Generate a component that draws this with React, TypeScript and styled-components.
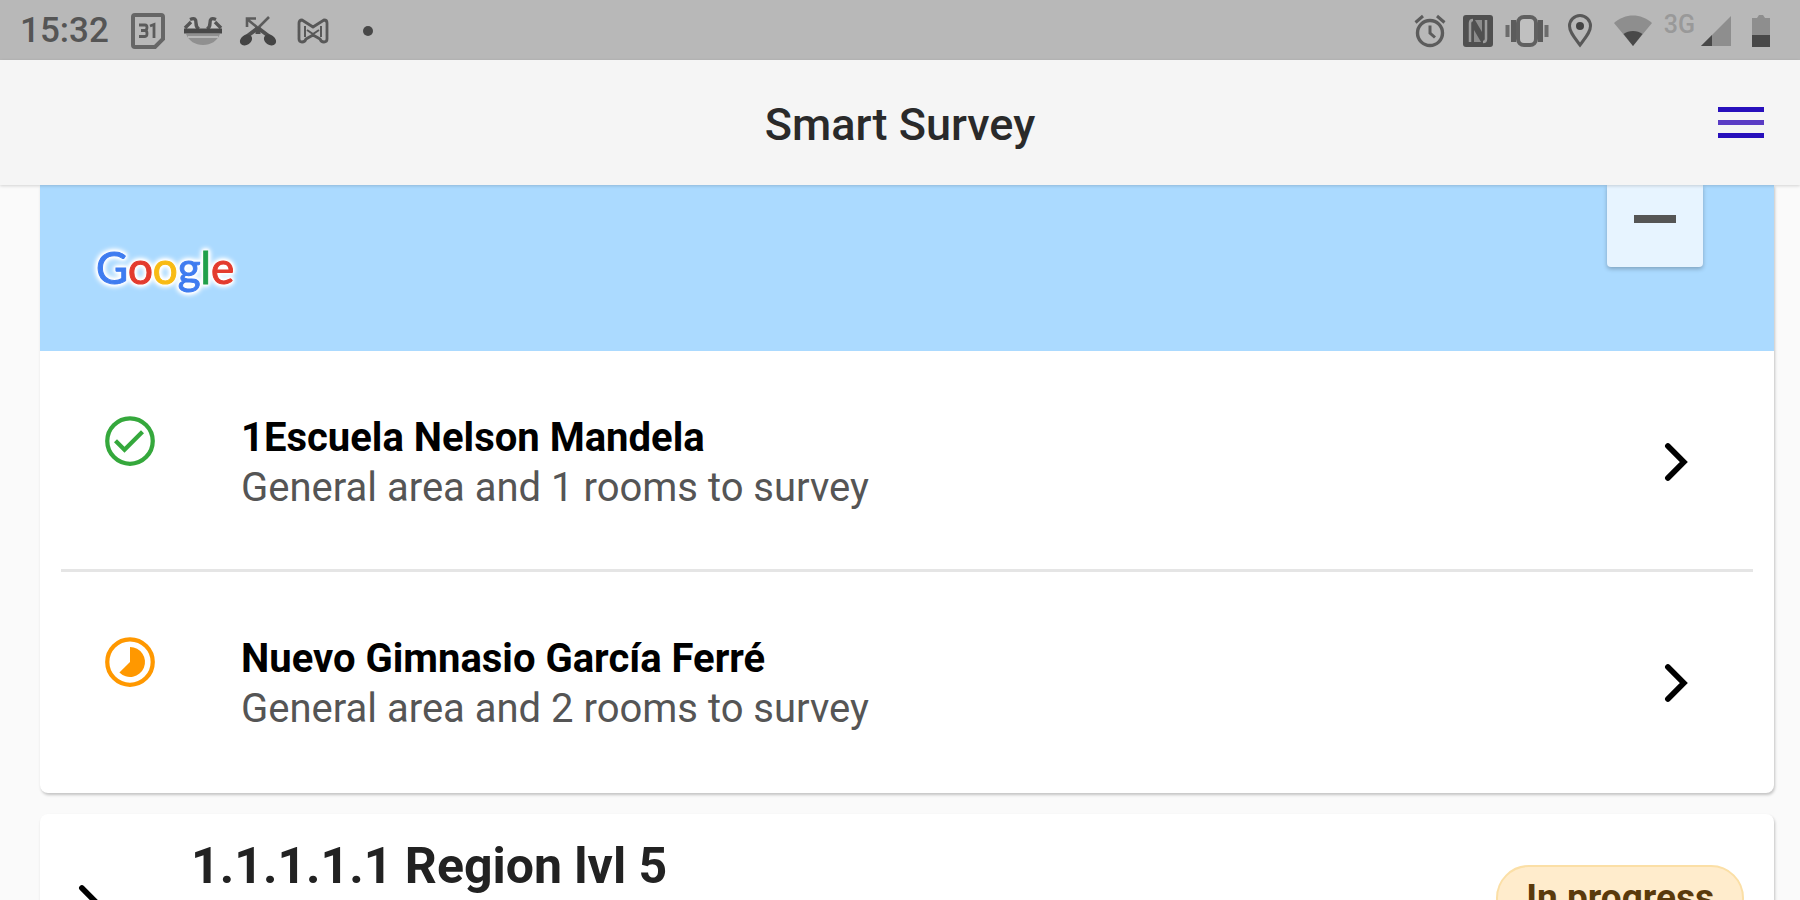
import React from "react";
import styled, { createGlobalStyle } from "styled-components";

const GlobalStyle = createGlobalStyle`
  *, *::before, *::after { box-sizing: border-box; }
  body {
    margin: 0;
    background: #fafafa;
    font-family: Roboto, "Liberation Sans", sans-serif;
    color: #000;
  }
  button { font: inherit; border: 0; padding: 0; margin: 0; color: inherit; cursor: pointer; }
`;

const Screen = styled.div`
  display: flex;
  flex-direction: column;
  height: 100vh;
  overflow: hidden;
`;

const StatusBar = styled.div`
  flex: none;
  display: flex;
  align-items: center;
  justify-content: space-between;
  height: 60px;
  padding: 2px 29px 0 20px;
  background: #b8b8b8;
  color: #555;
`;

const StatusGroup = styled.div`
  display: flex;
  align-items: center;
`;

const Clock = styled.time`
  font-size: 35px;
  font-weight: 500;
  line-height: 40px;
  margin-right: 12px;
`;

const Slot = styled.span<{ $width: number }>`
  display: flex;
  justify-content: center;
  width: ${(p) => p.$width}px;
`;

const Network = styled.span`
  display: flex;
  align-items: center;
  gap: 6px;
  padding: 0 20px 0 6px;
`;

const NetworkLabel = styled.span`
  font-size: 25px;
  font-weight: 500;
  line-height: 24px;
  padding-bottom: 12px;
  color: #999;
`;

const Header = styled.header`
  flex: none;
  position: relative;
  z-index: 1;
  display: grid;
  grid-template-columns: 1fr auto 1fr;
  align-items: center;
  height: 125px;
  padding: 0 36px;
  background: #f5f5f5;
  box-shadow: 0 1px 3px rgba(0, 0, 0, 0.16);
`;

const AppTitle = styled.h1`
  grid-column: 2;
  margin: 0;
  padding-top: 4px;
  font-size: 45px;
  font-weight: 500;
  line-height: 52px;
  color: #2a2a2a;
`;

const MenuButton = styled.button`
  justify-self: end;
  display: flex;
  flex-direction: column;
  gap: 8px;
  background: none;
`;

const MenuLine = styled.span`
  width: 46px;
  height: 5px;
  background: #2810bc;
  &:nth-child(2) {
    background: #5a3cc4;
  }
`;

const Content = styled.main`
  flex: 1;
  min-height: 0;
  overflow: hidden;
  display: flex;
  flex-direction: column;
  gap: 21px;
  padding: 0 26px 0 40px;
`;

const Card = styled.section<{ $continued?: boolean }>`
  flex: none;
  background: #fff;
  border-radius: ${(p) => (p.$continued ? "0 0 8px 8px" : "8px")};
  box-shadow: 1px 2px 3px rgba(0, 0, 0, 0.22);
`;

const MapStrip = styled.div`
  display: flex;
  justify-content: space-between;
  align-items: flex-start;
  height: 166px;
  padding: 0 71px 0 56px;
  background: #abdaff;
`;

const MapLogo = styled.span`
  padding-top: 56px;
  font-family: Lato, sans-serif;
  font-size: 44px;
  line-height: 52px;
  filter: drop-shadow(0 0 1px #fff) drop-shadow(0 0 1px #fff) drop-shadow(0 0 2px #fff) drop-shadow(0 0 2px #fff);
`;

const Letter = styled.span<{ $color: string }>`
  color: ${(p) => p.$color};
  -webkit-text-stroke: 1px ${(p) => p.$color};
`;

const ZoomOut = styled.button`
  display: flex;
  justify-content: center;
  width: 96px;
  height: 82px;
  padding-top: 30px;
  border-radius: 0 0 4px 4px;
  background: #e7f4ff;
  box-shadow: 0 2px 4px rgba(0, 0, 0, 0.25);
  &::before {
    content: "";
    width: 42px;
    height: 8px;
    background: #555;
  }
`;

const SiteList = styled.ul`
  margin: 0;
  padding: 0 0 3px;
  list-style: none;
`;

const Site = styled.li`
  & + &::before {
    content: "";
    display: block;
    height: 3px;
    margin: 0 21px;
    background: #e5e5e5;
  }
`;

const SiteRow = styled.button`
  display: flex;
  align-items: center;
  width: 100%;
  padding: 60px 62px 56px 60px;
  background: none;
  text-align: left;
`;

const StateIcon = styled.svg`
  flex: none;
  align-self: flex-start;
  width: 60px;
  height: 60px;
`;

const SiteText = styled.span`
  flex: 1;
  display: flex;
  flex-direction: column;
  padding: 2px 0 0 81px;
`;

const SiteName = styled.span`
  font-size: 40px;
  font-weight: 700;
  line-height: 50px;
`;

const SiteDetail = styled.span`
  font-size: 40px;
  line-height: 50px;
  color: #555;
`;

const ChevronIcon = styled.svg`
  flex: none;
  width: 72px;
  height: 72px;
`;

const RegionHeader = styled.button`
  display: flex;
  align-items: center;
  width: 100%;
  height: 180px;
  padding: 0 30px 0 14px;
  background: none;
  text-align: left;
`;

const RegionName = styled.span`
  flex: 1;
  align-self: flex-start;
  padding: 24px 0 0 65px;
  font-size: 50px;
  font-weight: 700;
  line-height: 56px;
  color: #222;
`;

const Badge = styled.span`
  align-self: flex-start;
  margin-top: 51px;
  padding: 6px 28px;
  border: 2px solid #fbdfa6;
  border-radius: 40px;
  background: #ffeccc;
  color: #5a3a0c;
  font-size: 37px;
  font-weight: 700;
  line-height: 50px;
`;

const Chevron = () => (
  <ChevronIcon viewBox="0 0 24 24" aria-hidden="true">
    <path d="M9.3 6.7 14.6 12l-5.3 5.3" fill="none" stroke="#000" strokeWidth="1.9" strokeLinecap="round" />
  </ChevronIcon>
);

const DoneIcon = () => (
  <StateIcon viewBox="0 0 24 24" role="img" aria-label="Completed">
    <circle cx="12" cy="12" r="9.1" fill="none" stroke="#35a83c" strokeWidth="1.7" />
    <path d="m6.2 11.9 3.6 3.6 7.2-7.2" fill="none" stroke="#35a83c" strokeWidth="1.7" />
  </StateIcon>
);

const PartialIcon = () => (
  <StateIcon viewBox="0 0 24 24" role="img" aria-label="Partly completed">
    <circle cx="12" cy="12" r="9.1" fill="none" stroke="#ff9800" strokeWidth="1.7" />
    <path d="M12 6a6 6 0 1 1-4.24 10.24L12 12z" fill="#ff9800" />
  </StateIcon>
);

const CalendarIcon = () => (
  <svg width="36" height="38" viewBox="0 0 36 38" aria-hidden="true">
    <path d="M5 3h26a2 2 0 0 1 2 2v22l-8 8H5a2 2 0 0 1-2-2V5a2 2 0 0 1 2-2z" fill="none" stroke="#666" strokeWidth="4" />
    <path d="M9 13h6q2 0 2 2.500t-2 3h-4 4q2 0 2 3t-2 3H9M20 14l4-1.500V26" fill="none" stroke="#5c5c5c" strokeWidth="2.800" />
  </svg>
);

const FaceIcon = () => (
  <svg width="40" height="30" viewBox="0 0 40 30" aria-hidden="true">
    <path d="M2 13C3 8 5 5 8 5c5-1 6 3 7 8M38 13C37 8 35 5 32 5c-5-1-6 3-7 8" fill="#c4c4c4" stroke="none" />
    <path d="M2 12 8 6M7 3.500c5-2 6 0 6 3.500 0 3 1 5 3 6M38 12 32 6M33 3.500c-5-2-6 0-6 3.500 0 3-1 5-3 6" fill="none" stroke="#555" strokeWidth="3.400" />
    <path d="M1 12.500h38v5H1z" fill="#484848" />
    <path d="M3 18c3 7 9 11 17 11s14-4 17-11z" fill="#909090" />
    <path d="M5 21h30" fill="none" stroke="#b8b8b8" strokeWidth="2" />
  </svg>
);

const MissedCallIcon = () => (
  <svg width="38" height="32" viewBox="0 0 38 32" aria-hidden="true">
    <path d="M30 2 19 13 8 4M8 12V3.500h9" fill="none" stroke="#5c5c5c" strokeWidth="2.600" />
    <path d="M19 12v7" stroke="#505050" strokeWidth="5" />
    <path d="M19 13 7 22M19 13l12 9" stroke="#505050" strokeWidth="4" />
    <ellipse cx="7" cy="25" rx="6.500" ry="5" transform="rotate(-35 7 25)" fill="#444" />
    <ellipse cx="31" cy="25" rx="6.500" ry="5" transform="rotate(35 31 25)" fill="#444" />
  </svg>
);

const MailIcon = () => (
  <svg width="32" height="26" viewBox="0 0 32 26" aria-hidden="true">
    <path d="M2 5q0-3 3-3l11 7 11-7q3 0 3 3v16q0 3-3 3-3 0-4-3l-7-4-7 4q-1 3-4 3-3 0-3-3z" fill="none" stroke="#585858" strokeWidth="2.800" strokeLinejoin="round" />
    <path d="M8 8v11M24 8v11M10 12l6 4 6-4" fill="none" stroke="#585858" strokeWidth="2" />
  </svg>
);

const DotIcon = () => (
  <svg width="12" height="12" viewBox="0 0 12 12" aria-hidden="true">
    <circle cx="6" cy="6" r="5" fill="#484848" />
  </svg>
);

const AlarmIcon = () => (
  <svg width="32" height="34" viewBox="0 0 32 34" aria-hidden="true">
    <circle cx="16" cy="19" r="12.500" fill="none" stroke="#5c5c5c" strokeWidth="3.400" />
    <path d="M1.500 8.500 9 2M30.500 8.500 23 2M16 11.500V19l5 4.500" fill="none" stroke="#5c5c5c" strokeWidth="3" />
  </svg>
);

const NfcIcon = () => (
  <svg width="32" height="32" viewBox="0 0 32 32" aria-hidden="true">
    <rect x="1" y="0" width="30" height="32" rx="3" fill="#505050" />
    <path d="M8 27V8q0-3 3-3M24 5v19q0 3-3 3" fill="none" stroke="#9c9c9c" strokeWidth="2.500" />
    <path d="M13 5 20 17V5zM12 27V15l7 12z" fill="#8c8c8c" />
  </svg>
);

const VibrateIcon = () => (
  <svg width="44" height="32" viewBox="0 0 44 32" aria-hidden="true">
    <rect x="13" y="2" width="18" height="28" rx="6" fill="#c0c0c0" stroke="#606060" strokeWidth="4" />
    <path d="M8.500 5v22M35.500 5v22" stroke="#5c5c5c" strokeWidth="5" />
    <path d="M2.500 10v12M41.500 10v12" stroke="#6c6c6c" strokeWidth="4" />
  </svg>
);

const PinIcon = () => (
  <svg width="26" height="34" viewBox="0 0 26 34" aria-hidden="true">
    <path d="M13 31C7 23 2.500 18 2.500 12a10.500 10.500 0 0 1 21 0c0 6-4.500 11-10.500 19z" fill="none" stroke="#585858" strokeWidth="3" />
    <circle cx="13" cy="12" r="4" fill="#444" />
  </svg>
);

const WifiIcon = () => (
  <svg width="38" height="32" viewBox="0 0 38 32" aria-hidden="true">
    <path d="M0 8C11-2 27-2 38 8L19 31z" fill="#8e8e8e" />
    <path d="M9.500 19c5-4 14-4 19 0L19 31z" fill="#484848" />
  </svg>
);

const SignalIcon = () => (
  <svg width="30" height="30" viewBox="0 0 30 30" aria-hidden="true">
    <path d="M0 30 30 0v30z" fill="#8e8e8e" />
    <path d="M0 30 11 19v11z" fill="#484848" />
  </svg>
);

const BatteryIcon = () => (
  <svg width="20" height="32" viewBox="0 0 20 32" aria-hidden="true">
    <path d="M1 3h5l2-3h4l2 3h5v18H1z" fill="#8e8e8e" />
    <path d="M1 20h18v12H1z" fill="#484848" />
  </svg>
);

const logo: [string, string][] = [
  ["G", "#3f7cf0"],
  ["o", "#e33b2e"],
  ["o", "#f8bb15"],
  ["g", "#3f7cf0"],
  ["l", "#20a04b"],
  ["e", "#e33b2e"],
];

const notifications = [CalendarIcon, FaceIcon, MissedCallIcon, MailIcon, DotIcon];

const indicators: [React.ComponentType, number][] = [
  [AlarmIcon, 48],
  [NfcIcon, 48],
  [VibrateIcon, 50],
  [PinIcon, 56],
  [WifiIcon, 50],
];

const sites = [
  { name: "1Escuela Nelson Mandela", rooms: 1, done: true },
  { name: "Nuevo Gimnasio García Ferré", rooms: 2, done: false },
];

export default function App() {
  return (
    <Screen>
      <GlobalStyle />
      <StatusBar>
        <StatusGroup>
          <Clock>15:32</Clock>
          {notifications.map((Icon, i) => (
            <Slot key={i} $width={55}>
              <Icon />
            </Slot>
          ))}
        </StatusGroup>
        <StatusGroup>
          {indicators.map(([Icon, width], i) => (
            <Slot key={i} $width={width}>
              <Icon />
            </Slot>
          ))}
          <Network>
            <NetworkLabel>3G</NetworkLabel>
            <SignalIcon />
          </Network>
          <BatteryIcon />
        </StatusGroup>
      </StatusBar>
      <Header>
        <AppTitle>Smart Survey</AppTitle>
        <MenuButton aria-label="Open menu">
          <MenuLine />
          <MenuLine />
          <MenuLine />
        </MenuButton>
      </Header>
      <Content>
        <Card $continued>
          <MapStrip>
            <MapLogo>
              {logo.map(([char, color], i) => (
                <Letter key={i} $color={color}>{char}</Letter>
              ))}
            </MapLogo>
            <ZoomOut aria-label="Zoom out" />
          </MapStrip>
          <SiteList>
            {sites.map((site) => (
              <Site key={site.name}>
                <SiteRow>
                  {site.done ? <DoneIcon /> : <PartialIcon />}
                  <SiteText>
                    <SiteName>{site.name}</SiteName>
                    <SiteDetail>{`General area and ${site.rooms} rooms to survey`}</SiteDetail>
                  </SiteText>
                  <Chevron />
                </SiteRow>
              </Site>
            ))}
          </SiteList>
        </Card>
        <Card>
          <RegionHeader>
            <Chevron />
            <RegionName>1.1.1.1.1 Region lvl 5</RegionName>
            <Badge>In progress</Badge>
          </RegionHeader>
        </Card>
      </Content>
    </Screen>
  );
}
